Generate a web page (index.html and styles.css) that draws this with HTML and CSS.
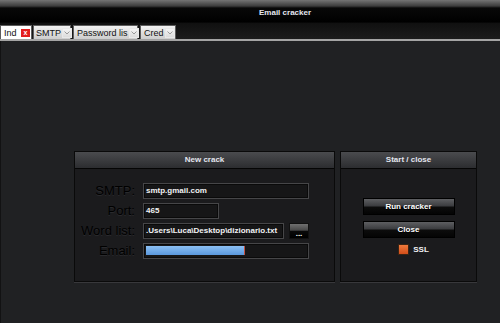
FILE: index.html
```html
<!DOCTYPE html>
<html lang="en">

<head>
    <meta charset="UTF-8">
    <meta name="viewport" content="width=device-width, initial-scale=1.0">
    <title>Email cracker</title>
    <link rel="stylesheet" href="styles.css">
</head>

<body>
    <div class="titlebar">Email cracker</div>

    <div class="tabstrip">
        <div class="tab tab-index tab-active">
            <span class="tab-label">Ind</span>
            <span class="tab-close">x</span>
        </div>
        <div class="tab tab-smtp">
            <span class="tab-label">SMTP</span>
            <span class="tab-arrow"><svg width="6" height="4" viewBox="0 0 6 4"><path d="M0.5 0.5 L3 3 L5.5 0.5" fill="none" stroke="#9a9a9a" stroke-width="1"/></svg></span>
        </div>
        <div class="tab tab-pass">
            <span class="tab-label">Password lis</span>
            <span class="tab-arrow"><svg width="6" height="4" viewBox="0 0 6 4"><path d="M0.5 0.5 L3 3 L5.5 0.5" fill="none" stroke="#9a9a9a" stroke-width="1"/></svg></span>
        </div>
        <div class="tab tab-cred">
            <span class="tab-label">Cred</span>
            <span class="tab-arrow"><svg width="6" height="4" viewBox="0 0 6 4"><path d="M0.5 0.5 L3 3 L5.5 0.5" fill="none" stroke="#9a9a9a" stroke-width="1"/></svg></span>
        </div>
    </div>

    <div class="main">
        <div class="panels">
            <!-- nuovo attacco -->
            <div class="panel panel-crack">
                <div class="panel-head">New crack</div>
                <div class="form">
                    <label class="label">SMTP:</label>
                    <div class="field field-wide">smtp.gmail.com</div>

                    <label class="label">Port:</label>
                    <div class="field field-port">465</div>

                    <label class="label">Word list:</label>
                    <div class="row">
                        <div class="field field-list">.Users\Luca\Desktop\dizionario.txt</div>
                        <div class="btn-browse">...</div>
                    </div>

                    <label class="label">Email:</label>
                    <div class="field field-wide">
                        <div class="email-blur"></div>
                    </div>
                </div>
            </div>

            <!-- avvio / chiusura -->
            <div class="panel panel-start">
                <div class="panel-head">Start / close</div>
                <div class="actions">
                    <div class="btn">Run cracker</div>
                    <div class="btn">Close</div>
                    <div class="check">
                        <span class="check-box"></span>
                        <span class="check-text">SSL</span>
                    </div>
                </div>
            </div>
        </div>
    </div>
</body>

</html>
```

FILE: styles.css
```css
* {
    margin: 0;
    padding: 0;
    box-sizing: border-box;
}

body {
    width: 500px;
    height: 323px;
    overflow: hidden;
    background-color: #202123;
    font-family: "Liberation Sans", Arial, sans-serif;
}

/* barra del titolo */
.titlebar {
    height: 23px;
    padding: 8px 0 0 259px;
    font-size: 8px;
    line-height: 9px;
    font-weight: bold;
    color: #e6e8f0;
    background: linear-gradient(#747474 0, #3c3c3c 6px, #080808 8px, #000 22px, #0d0d0d 23px);
}

/* schede */
.tabstrip {
    display: flex;
    align-items: flex-end;
    height: 18px;
    background: linear-gradient(#101010, #1c1c1c);
    border-bottom: 2px solid #a4a4a4;
}

.tab {
    display: flex;
    align-items: center;
    justify-content: space-between;
    height: 14px;
    padding: 0 1px 0 3px;
    font-size: 9px;
    color: #111;
    background: linear-gradient(#f2f2f2, #cdcdcd);
    border: 1px solid #5c5c5c;
    border-bottom: 0;
}

.tab-label {
    white-space: nowrap;
}

.tab-active {
    background: #fff;
}

.tab-index {
    width: 32px;
}

.tab-smtp {
    width: 38px;
    margin-left: 1px;
    padding-left: 2px;
}

.tab-pass {
    width: 65px;
    margin-left: 2px;
}

.tab-cred {
    width: 36px;
    margin-left: 2px;
}

.tab-close {
    width: 9px;
    height: 8px;
    margin-left: 1px;
    font-size: 7px;
    line-height: 7px;
    font-weight: bold;
    text-align: center;
    color: #fff;
    background-color: #e41f1f;
}

.tab-arrow {
    display: flex;
    align-items: center;
    justify-content: center;
    flex-shrink: 0;
    width: 10px;
    height: 10px;
    margin-left: 1px;
    background: linear-gradient(#f4f4f4, #dcdcdc);
    border: 1px solid #e8e8e8;
}

/* area principale */
.main {
    height: 282px;
    padding: 110px 0 0 73px;
    border-left: 1px solid #121213;
}

.panels {
    display: flex;
    gap: 5px;
}

.panel {
    height: 131px;
    background-color: #1b1b1d;
    border: 1px solid #0a0a0a;
    box-shadow: 0 1px 0 #38383b;
}

.panel-crack {
    width: 261px;
}

.panel-start {
    width: 137px;
}

.panel-head {
    height: 17px;
    font-size: 8px;
    line-height: 16px;
    font-weight: bold;
    text-align: center;
    color: #e4e6ee;
    background: linear-gradient(#4a4b4e, #2c2d30);
    border-bottom: 1px solid #050505;
}

.form {
    display: grid;
    grid-template-columns: 60px auto;
    column-gap: 8px;
    row-gap: 4px;
    padding-top: 14px;
}

.label {
    font-size: 13px;
    line-height: 16px;
    text-align: right;
    color: #000;
    text-shadow: 0 1px 0 #2a2a2d;
}

.field {
    height: 16px;
    padding-left: 2px;
    overflow: hidden;
    white-space: nowrap;
    font-size: 8px;
    line-height: 14px;
    font-weight: bold;
    color: #f2f2f4;
    background-color: #161617;
    border: 1px solid #464648;
    box-shadow: inset 0 0 0 1px #0a0a0a;
}

.field-wide {
    width: 166px;
}

.field-port {
    width: 76px;
}

.field-list {
    width: 141px;
}

.row {
    display: flex;
    gap: 5px;
}

.btn-browse {
    width: 20px;
    height: 16px;
    padding-top: 5px;
    font-size: 8px;
    line-height: 9px;
    font-weight: bold;
    text-align: center;
    color: #fff;
    background: linear-gradient(#707070 0, #484848 45%, #0a0a0a 50%, #000 100%);
    border: 1px solid #111;
}

.email-blur {
    width: 99px;
    height: 9px;
    margin-top: 2px;
    background: linear-gradient(#8cc0f4, #5a98dc);
    border-right: 1px solid #c05040;
    filter: blur(0.6px);
}

/* pulsanti */
.actions {
    display: flex;
    flex-direction: column;
    align-items: center;
    gap: 6px;
    padding-top: 29px;
}

.btn {
    width: 92px;
    height: 17px;
    font-size: 8px;
    line-height: 15px;
    font-weight: bold;
    text-align: center;
    color: #fff;
    text-shadow: 0 1px 0 #000;
    background: linear-gradient(#5e5f62 0, #3c3d40 45%, #0c0c0c 55%, #040404 100%);
    border: 1px solid #000;
}

.check {
    display: flex;
    align-items: center;
    gap: 4px;
    padding-left: 10px;
}

.check-box {
    width: 11px;
    height: 11px;
    background: linear-gradient(#f07a3c, #d24e1a);
    border: 1px solid #3a2414;
}

.check-text {
    font-size: 8px;
    font-weight: bold;
    color: #f2f2f4;
}
```
